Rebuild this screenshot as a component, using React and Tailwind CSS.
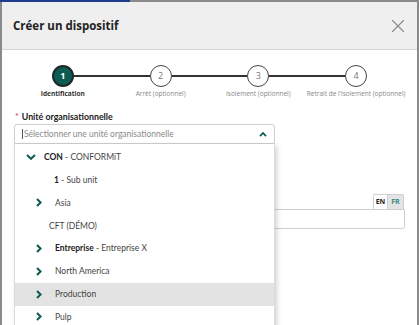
import { X } from 'lucide-react';

const steps = [
    { n: '1', label: 'Identification', active: true },
    { n: '2', label: 'Arrêt (optionnel)' },
    { n: '3', label: 'Isolement (optionnel)' },
    { n: '4', label: "Retrait de l'isolement (optionnel)" },
];

const rows = [
    { kind: 'open', code: 'CON', name: 'CONFORMiT' },
    { kind: 'leaf', code: '1', name: 'Sub unit', pad: 'pl-[39px]' },
    { kind: 'closed', name: 'Asia' },
    { kind: 'leaf', name: 'CFT (DÉMO)', pad: 'pl-[34px]' },
    { kind: 'closed', code: 'Entreprise', name: 'Entreprise X' },
    { kind: 'closed', name: 'North America' },
    { kind: 'closed', name: 'Production', hover: true },
    { kind: 'closed', name: 'Pulp' },
];

function ChevronRightSmall() {
    return (
        <svg width="6" height="9" viewBox="0 0 6 9" className="shrink-0">
            <polyline points="1,1 4.6,4.5 1,8" fill="none" stroke="#0b5a52" strokeWidth="2" />
        </svg>
    );
}

function ChevronDownSmall() {
    return (
        <svg width="10" height="6" viewBox="0 0 10 6" className="shrink-0">
            <polyline points="1,1 5,4.8 9,1" fill="none" stroke="#0b5a52" strokeWidth="2" />
        </svg>
    );
}

export default function App() {
    return (
        <div className="w-[419px] h-[325px] overflow-hidden bg-[#8a8a8a] font-['Open_Sans',sans-serif]">
            {/* top strip of the page behind */}
            <div className="flex h-[2px]">
                <div className="w-[130px] bg-[#1d3c8c]" />
            </div>

            {/* Modal */}
            <div className="mx-[2px] h-[323px] bg-white">
                <div className="flex h-[48px] items-center justify-between border-b border-[#d6d6d6] bg-[#efefef] pl-[11px] pr-[8px]">
                    <h1 className="text-[11.5px] font-bold text-[#222]">Créer un dispositif</h1>
                    <X size={22} strokeWidth={1.2} className="text-[#8a8a8a]" />
                </div>

                <div className="px-[12px]">
                    {/* Stepper */}
                    <div className="grid grid-cols-4 pt-[15px]">
                        {steps.map((s, i) => (
                            <div key={s.n} className="flex flex-col items-center">
                                <div className="flex w-full items-center">
                                    <div className={`h-[1.5px] flex-1 ${i === 0 ? 'bg-transparent' : 'bg-[#333]'}`} />
                                    {s.active ? (
                                        <div className="flex h-[22px] w-[22px] items-center justify-center rounded-full border-[2px] border-[#1f2a28] bg-[#0d5c53] text-[9px] font-bold text-white">
                                            {s.n}
                                        </div>
                                    ) : (
                                        <div className="flex h-[22px] w-[22px] items-center justify-center rounded-full border-[1.5px] border-[#444] bg-white text-[9px] text-[#777]">
                                            {s.n}
                                        </div>
                                    )}
                                    <div className={`h-[1.5px] flex-1 ${i === 3 ? 'bg-transparent' : 'bg-[#333]'}`} />
                                </div>
                                <span className={`mt-[2px] whitespace-nowrap text-[6.5px] leading-[9px] ${s.active ? 'font-bold text-[#333]' : 'text-[#888]'}`}>
                                    {s.label}
                                </span>
                            </div>
                        ))}
                    </div>

                    {/* Organisational unit */}
                    <div className="mt-[13px] flex items-center gap-[3px] pl-[1px] font-['Lato',sans-serif] text-[8.8px] leading-[12px]">
                        <span className="text-[#e0303a]">*</span>
                        <span className="font-bold text-[#222]">Unité organisationnelle</span>
                    </div>

                    <div className="relative z-10 mt-[1px] w-[261px] font-['Lato',sans-serif]">
                        <div className="flex h-[20px] items-center justify-between rounded-t-[3px] border border-[#cfcfcf] bg-white pl-[7px] pr-[7px]">
                            <span className="border-l border-[#555] pl-[1px] text-[8.5px] leading-[10px] text-[#8a8a8a]">
                                Sélectionner une unité organisationnelle
                            </span>
                            <svg width="8" height="5" viewBox="0 0 8 5">
                                <polyline points="1,4.2 4,1 7,4.2" fill="none" stroke="#0b5a52" strokeWidth="1.7" />
                            </svg>
                        </div>

                        {/* dropdown tree */}
                        <div className="absolute left-0 top-full w-full border-x border-[#dcdcdc] bg-white pt-[2px] shadow-[2px_2px_5px_rgba(0,0,0,0.18)]">
                            {rows.map((r) => (
                                <div
                                    key={r.name}
                                    className={`flex h-[22.8px] items-center whitespace-nowrap text-[8.5px] leading-none text-[#444] ${r.hover ? 'bg-[#e3e3e3]' : ''} ${
                                        r.kind === 'open' ? 'pl-[11px]' : r.kind === 'closed' ? 'pl-[21px]' : r.pad
                                    }`}
                                >
                                    {r.kind === 'open' && <ChevronDownSmall />}
                                    {r.kind === 'closed' && <ChevronRightSmall />}
                                    <span className={r.kind === 'open' ? 'ml-[8px]' : r.kind === 'closed' ? 'ml-[13px]' : ''}>
                                        {r.code && <span className="font-bold text-[#222]">{r.code}</span>}
                                        {r.code && ' - '}
                                        {r.name}
                                    </span>
                                </div>
                            ))}
                        </div>
                    </div>

                    {/* field behind the dropdown */}
                    <div className="mt-[50px]">
                        <div className="flex justify-end pr-[1px]">
                            <span className="flex h-[15px] w-[15px] items-center justify-center rounded-tl-[2px] border border-b-0 border-[#cfcfcf] bg-white text-[7px] font-bold text-[#222]">
                                EN
                            </span>
                            <span className="flex h-[15px] w-[16px] items-center justify-center rounded-tr-[2px] border border-b-0 border-l-0 border-[#cfcfcf] bg-[#e4e4e4] text-[7px] font-bold text-[#3c8c84]">
                                FR
                            </span>
                        </div>
                        <div className="h-[20px] rounded-b-[3px] rounded-tl-[3px] border border-[#cfcfcf] bg-white" />
                    </div>
                </div>
            </div>
        </div>
    );
}
